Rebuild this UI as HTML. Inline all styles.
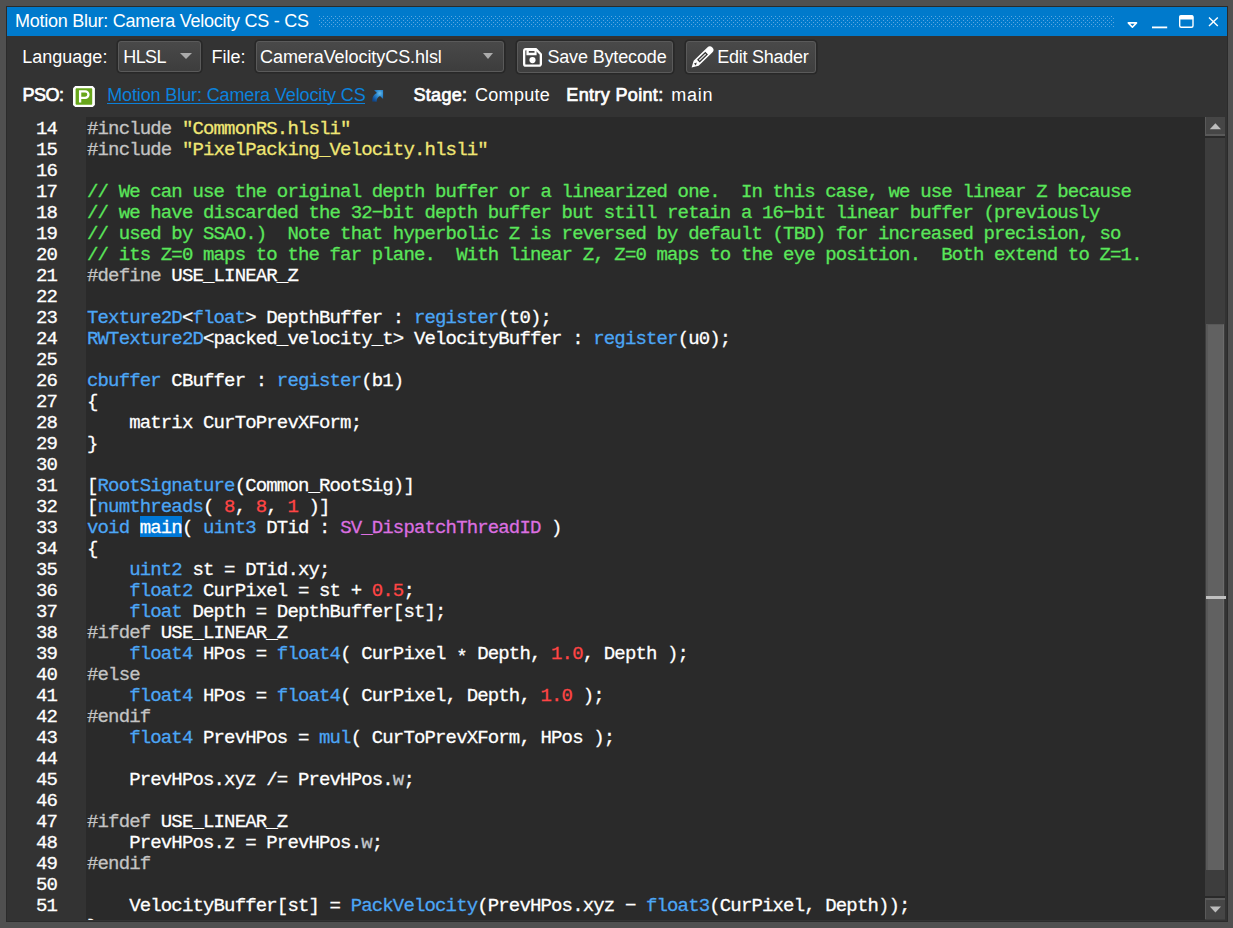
<!DOCTYPE html>
<html>
<head>
<meta charset="utf-8">
<title>Motion Blur: Camera Velocity CS - CS</title>
<style>
*{box-sizing:border-box;margin:0;padding:0}
html,body{width:1233px;height:928px;overflow:hidden;background:#505050}
body{font-family:"Liberation Sans",sans-serif;color:#fff;position:relative}
#win{position:absolute;left:6px;top:6px;width:1222px;height:916px;background:#333333;border:1px solid #2b2b2b}
#title{position:absolute;left:0;top:0;width:1220px;height:29px;background:#007acc}
#title .t{position:absolute;left:8px;top:3px;font-size:18px;line-height:22px;letter-spacing:-0.26px;color:#fff;white-space:nowrap}
#grip{position:absolute;left:312px;top:8.5px;width:796px;height:12px}
.ti{position:absolute;left:0;top:0}
.lbl{position:absolute;font-size:18px;line-height:22px;white-space:nowrap;color:#fff}
.b{font-weight:normal;-webkit-text-stroke:0.7px}
.combo{position:absolute;height:31px;background:linear-gradient(#494949,#3d3d3d);border:1px solid #5a5a5a;border-radius:3px;box-shadow:0 0 0 1.6px #282828}
.combo .v{position:absolute;top:4px;font-size:18px;line-height:22px;white-space:nowrap}
.combo .a{position:absolute;top:11px;width:0;height:0;border-left:6px solid transparent;border-right:6px solid transparent;border-top:6.5px solid #ababab}
.btn{position:absolute;height:32px;background:linear-gradient(#494949,#3f3f3f);border:1px solid #5a5a5a;border-radius:3px;box-shadow:0 0 0 1.6px #282828}
.btn .v{position:absolute;top:4px;font-size:18px;line-height:22px;white-space:nowrap}
#code{position:absolute;left:79px;top:110px;width:1119px;height:803px;background:#2a2a2a;overflow:hidden}
#gut{position:absolute;left:0;top:110px;width:79px;height:803px;overflow:hidden}
pre{font-family:"Liberation Mono",monospace;font-size:19px;line-height:21px;letter-spacing:-0.855px;color:#fff;white-space:pre;-webkit-text-stroke:0.28px}
#gut pre{position:absolute;left:29px;top:2px}
#code pre{position:absolute;left:1px;top:2px}
.c{color:#5ae65a}.s{color:#f0e674}.p{color:#c4c4c4}.k{color:#4ca6f5}.n{color:#ff4545}.m{color:#dc6fe0}.w{color:#c4c8cc}
.selbg{position:absolute;left:54px;top:399px;width:42px;height:21px;background:#0078d7}
#sb{position:absolute;left:1198px;top:110px;width:20px;height:803px;background:#3d3d3d}
#sb .up{position:absolute;left:0;top:0;width:20px;height:19.2px;background:#464646;border-left:1.5px solid #5a5a5a;border-bottom:2px solid #5a5a5a}
#sb .upl{position:absolute;left:0;top:19.2px;width:20px;height:2px;background:#2a2a2a}
#sb .dn{position:absolute;left:0;top:781px;width:20px;height:20.6px;background:#464646;border-left:1.5px solid #5a5a5a;border-top:2px solid #5a5a5a}
#sb .dnl{position:absolute;left:0;top:779px;width:20px;height:2px;background:#2a2a2a}
#sb .th{position:absolute;left:0.5px;top:206.5px;width:18.5px;height:546px;background:#616161;border-left:2.5px solid #585858;border-right:1px solid #6b6b6b;border-top:1.5px solid #585858}
#sb .mk{position:absolute;left:1px;top:479px;width:20px;height:3px;background:#c0c0c0}
</style>
</head>
<body>
<div id="win">
  <div id="title"><span class="t">Motion Blur: Camera Velocity CS - CS</span>
    <svg class="ti" width="1220" height="29" viewBox="0 0 1220 29">
      <defs><pattern id="gp" x="312" y="9" width="4" height="4" patternUnits="userSpaceOnUse"><rect x="0" y="0" width="1" height="1" fill="#5ca7e1"/><rect x="2" y="2" width="1" height="1" fill="#5ca7e1"/></pattern></defs>
      <rect x="312" y="9" width="796" height="12" fill="url(#gp)" shape-rendering="crispEdges"/>
      <path d="M1121.3 15.9 L1129.5 15.9 L1125.4 20.2 Z" fill="#007acc" stroke="#fff" stroke-width="1.6" stroke-linejoin="round"/>
      <rect x="1145" y="19.5" width="15.2" height="1.8" fill="#fff"/>
      <rect x="1172.7" y="8.8" width="13.3" height="11.5" rx="1.5" fill="none" stroke="#fff" stroke-width="1.4"/>
      <rect x="1172.4" y="8.4" width="13.9" height="4.2" rx="1" fill="#fff"/>
      <path d="M1202 10.4 L1210.8 19 M1210.8 10.4 L1202 19" stroke="#fff" stroke-width="1.4" fill="none"/>
    </svg>
  </div>
  <span class="lbl" style="left:15.3px;top:39px">Language:</span>
  <div class="combo" style="left:111px;top:34px;width:83px"><span class="v" style="left:4.3px;letter-spacing:-0.6px">HLSL</span><span class="a" style="left:60.8px"></span></div>
  <span class="lbl" style="left:204.4px;top:39px">File:</span>
  <div class="combo" style="left:249px;top:34px;width:248px"><span class="v" style="left:3px;letter-spacing:-0.06px">CameraVelocityCS.hlsl</span><span class="a" style="left:226.3px;border-left-width:5.4px;border-right-width:5.4px"></span></div>
  <div class="btn" style="left:510px;top:34px;width:156px"><span class="v" style="left:29.4px;letter-spacing:-0.15px">Save Bytecode</span>
    <svg style="position:absolute;left:5.1px;top:5.6px" width="20" height="20" viewBox="0 0 20 20">
      <path d="M2.9 1.15 H12.9 L17.85 6.2 V15.9 a1.75 1.75 0 0 1 -1.75 1.75 H2.9 a1.75 1.75 0 0 1 -1.75 -1.75 V2.9 a1.75 1.75 0 0 1 1.75 -1.75 Z" fill="none" stroke="#fff" stroke-width="2.3" stroke-linejoin="round"/>
      <path d="M3.4 1.15 H13.6 V7.3 H3.4 Z M5.8 3.1 V4.7 H11.5 V3.1 Z" fill="#fff" fill-rule="evenodd"/>
      <circle cx="9.5" cy="12.1" r="3.1" fill="#fff"/>
    </svg>
  </div>
  <div class="btn" style="left:679px;top:34px;width:130px"><span class="v" style="left:30.2px;letter-spacing:-0.25px">Edit Shader</span>
    <svg style="position:absolute;left:0;top:0" width="30" height="30" viewBox="0 0 30 30">
      <g transform="translate(4.6 25.6) rotate(-44)">
        <path d="M0 0 L6.3 -3.6 L25.3 -3.6 A3.6 3.6 0 0 1 25.3 3.6 L6.3 3.6 Z" fill="#fff"/>
        <rect x="10" y="-1.3" width="10.3" height="2.6" fill="#dcdcdc" stroke="#333" stroke-width="1.2"/>
        <path d="M4.6 -1.4 L7.2 0 L4.6 1.4 Z" fill="#3c3c3c"/>
      </g>
    </svg>
  </div>
  <span class="lbl b" style="left:15.6px;top:77.4px;letter-spacing:-0.5px">PSO:</span>
  <svg style="position:absolute;left:66px;top:78.8px" width="22" height="22" viewBox="0 0 22 22">
    <path d="M2.2 0 H19.7 L21.9 2.2 V18.9 L19.7 21.1 H2.2 L0 18.9 V2.2 Z" fill="#fff"/>
    <rect x="2.6" y="2.3" width="16.6" height="16.5" rx="0.8" fill="#68a61b"/>
    <path d="M7.1 16.4 V5.3 H12.2 A3.25 3.25 0 0 1 12.2 11.8 H7.1" fill="none" stroke="#fff" stroke-width="2.3"/>
  </svg>
  <span class="lbl" style="left:100.2px;top:77.4px;color:#0c82dc;letter-spacing:-0.12px">Motion Blur: Camera Velocity CS</span>
  <div style="position:absolute;left:100px;top:96px;width:258px;height:1.4px;background:#0c80d8"></div>
  <svg style="position:absolute;left:364px;top:82px" width="14" height="14" viewBox="0 0 14 14">
    <defs><radialGradient id="ag" cx="0.68" cy="0.28" r="0.85"><stop offset="0" stop-color="#70c4f2"/><stop offset="0.35" stop-color="#2f92dc"/><stop offset="0.8" stop-color="#1158a8"/><stop offset="1" stop-color="#0d468c"/></radialGradient></defs>
    <path d="M3 1 H12.1 V10 L9 7 C6.6 8 5.6 10 5.6 12.8 L1.3 12.6 C0.9 8 3 5.2 6 4.1 Z" fill="url(#ag)" opacity="0.95"/>
  </svg>
  <span class="lbl b" style="left:406.5px;top:77.4px;letter-spacing:0.3px">Stage:</span>
  <span class="lbl" style="left:468px;top:77.4px;letter-spacing:0.3px">Compute</span>
  <span class="lbl b" style="left:559.3px;top:77.4px;letter-spacing:0.35px">Entry Point:</span>
  <span class="lbl" style="left:664.3px;top:77.4px;letter-spacing:0.7px">main</span>
  <div id="gut"><pre>14
15
16
17
18
19
20
21
22
23
24
25
26
27
28
29
30
31
32
33
34
35
36
37
38
39
40
41
42
43
44
45
46
47
48
49
50
51</pre></div>
  <div id="code"><div class="selbg"></div><pre><span class="p">#include</span> <span class="s">"CommonRS.hlsli"</span>
<span class="p">#include</span> <span class="s">"PixelPacking_Velocity.hlsli"</span>

<span class="c">// We can use the original depth buffer or a linearized one.  In this case, we use linear Z because</span>
<span class="c">// we have discarded the 32&#x2212;bit depth buffer but still retain a 16&#x2212;bit linear buffer (previously</span>
<span class="c">// used by SSAO.)  Note that hyperbolic Z is reversed by default (TBD) for increased precision, so</span>
<span class="c">// its Z=0 maps to the far plane.  With linear Z, Z=0 maps to the eye position.  Both extend to Z=1.</span>
<span class="p">#define</span> USE_LINEAR_Z

<span class="k">Texture2D</span>&lt;<span class="k">float</span>&gt; DepthBuffer : <span class="k">register</span>(t0);
<span class="k">RWTexture2D</span>&lt;packed_velocity_t&gt; VelocityBuffer : <span class="k">register</span>(u0);

<span class="k">cbuffer</span> CBuffer : <span class="k">register</span>(b1)
{
    matrix CurToPrevXForm;
}

[<span class="k">RootSignature</span>(Common_RootSig)]
[<span class="k">numthreads</span>( <span class="n">8</span>, <span class="n">8</span>, <span class="n">1</span> )]
<span class="k">void</span> main( <span class="k">uint3</span> DTid : <span class="m">SV_DispatchThreadID</span> )
{
    <span class="k">uint2</span> st = DTid.xy;
    <span class="k">float2</span> CurPixel = st + <span class="n">0.5</span>;
    <span class="k">float</span> Depth = DepthBuffer[st];
<span class="p">#ifdef</span> USE_LINEAR_Z
    <span class="k">float4</span> HPos = <span class="k">float4</span>( CurPixel <span style="position:relative;top:3px">*</span> Depth, <span class="n">1.0</span>, Depth );
<span class="p">#else</span>
    <span class="k">float4</span> HPos = <span class="k">float4</span>( CurPixel, Depth, <span class="n">1.0</span> );
<span class="p">#endif</span>
    <span class="k">float4</span> PrevHPos = <span class="k">mul</span>( CurToPrevXForm, HPos );

    PrevHPos.xyz /= PrevHPos.<span class="w">w</span>;

<span class="p">#ifdef</span> USE_LINEAR_Z
    PrevHPos.z = PrevHPos.<span class="w">w</span>;
<span class="p">#endif</span>

    VelocityBuffer[st] = <span class="k">PackVelocity</span>(PrevHPos.xyz &#x2212; <span class="k">float3</span>(CurPixel, Depth));
}</pre></div>
  <div id="sb"><div class="up"></div><div class="upl"></div><div class="th"></div><div class="mk"></div><div class="dnl"></div><div class="dn"></div>
    <svg style="position:absolute;left:0;top:0" width="20" height="803" viewBox="0 0 20 803"><path d="M4.8 12.3 L10.4 6.3 L16 12.3 Z" fill="#bdbdbd"/><path d="M4.8 789.5 L16 789.5 L10.4 795.6 Z" fill="#bdbdbd"/></svg>
  </div>
</div>
</body>
</html>
